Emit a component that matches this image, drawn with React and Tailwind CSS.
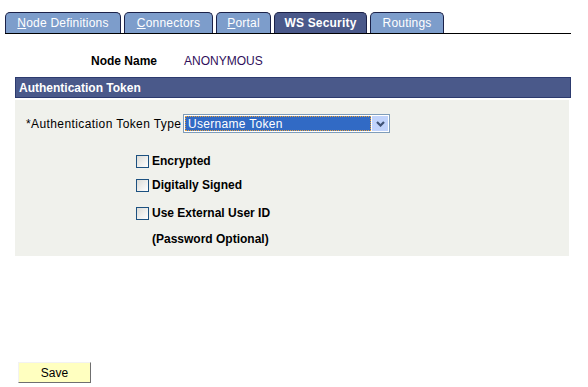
import React from "react";

const tabs = [
  { label: "Node Definitions", key: "N", rest: "ode Definitions", w: "w-[116px]" },
  { label: "Connectors", key: "C", rest: "onnectors", w: "w-[89px]" },
  { label: "Portal", key: "P", rest: "ortal", w: "w-[55px]" },
  { label: "WS Security", active: true, w: "w-[93px]" },
  { label: "Routings", w: "w-[74px]" },
];

const Checkbox = ({ label }) => (
  <div className="flex items-center gap-[3px]">
    <div className="w-[13px] h-[13px] border border-[#1c5180] bg-gradient-to-br from-[#dcdcd7] to-[#ffffff]" />
    <span className="font-bold text-[12px] text-black">{label}</span>
  </div>
);

export default function App() {
  return (
    <div className="w-[588px] h-[387px] bg-white font-['Liberation_Sans',Arial,sans-serif] text-[12px] flex flex-col">
      {/* --- TABS --- */}
      <div className="ml-[5px] mt-[12px] w-[566px] flex gap-[3px] border-b border-black">
        {tabs.map((t) => (
          <div
            key={t.label}
            className={`${t.w} h-[21px] flex items-center justify-center rounded-t-[5px] border border-b-0 border-[#1b2148] text-white tracking-[0.2px] ${t.active ? "bg-[#4a598a] font-bold" : "bg-[#7d9dcb]"}`}
          >
            {t.key ? (
              <span><span className="underline">{t.key}</span>{t.rest}</span>
            ) : (
              t.label
            )}
          </div>
        ))}
      </div>

      {/* --- NODE NAME --- */}
      <div className="flex items-center mt-[20px] h-[14px]">
        <span className="ml-[91px] w-[93px] font-bold text-black">Node Name</span>
        <span className="text-[#2f0f5a]">ANONYMOUS</span>
      </div>

      {/* --- SECTION --- */}
      <div className="ml-[15px] mt-[9px] w-[556px] h-[21px] bg-[#4a598a] border border-[#2c3a6e] flex items-center pl-[3px]">
        <span className="font-bold text-white">Authentication Token</span>
      </div>

      <div className="ml-[15px] mt-[2px] w-[554px] h-[156px] bg-[#f0f1ec] flex flex-col">
        <div className="flex items-start mt-[14px]">
          <span className="ml-[11px] mt-[1px] w-[157px] text-black tracking-[0.4px] whitespace-nowrap">*Authentication Token Type</span>
          <div className="w-[207px] h-[19px] border border-[#7f9db9] bg-white flex items-center p-[1px]">
            <div className="flex-1 h-full bg-[#316ac5] border border-dotted border-[#e8a23b] flex items-center pl-[2px] text-white tracking-[0.3px]">
              Username Token
            </div>
            <div className="ml-[1px] w-[16px] h-full bg-[#c1d3fb] flex items-center justify-center">
              <svg width="9" height="6" viewBox="0 0 9 6">
                <path d="M1 1 L4.5 4.5 L8 1" fill="none" stroke="#3f5275" strokeWidth="2.2" />
              </svg>
            </div>
          </div>
        </div>

        <div className="ml-[121px] mt-[19px] flex flex-col">
          <Checkbox label="Encrypted" />
          <div className="mt-[6px]"><Checkbox label="Digitally Signed" /></div>
          <div className="mt-[10px]"><Checkbox label="Use External User ID" /></div>
          <span className="ml-[16px] mt-[8px] font-bold text-black">(Password Optional)</span>
        </div>
      </div>

      {/* --- SAVE --- */}
      <div className="ml-[18px] mt-[106px]">
        <button className="w-[73px] h-[21px] bg-[#ffffc0] border border-t-[#f2f2f2] border-l-[#f2f2f2] border-b-[#6f6f6f] border-r-[#6f6f6f] text-black text-[12px]">
          Save
        </button>
      </div>
    </div>
  );
}
